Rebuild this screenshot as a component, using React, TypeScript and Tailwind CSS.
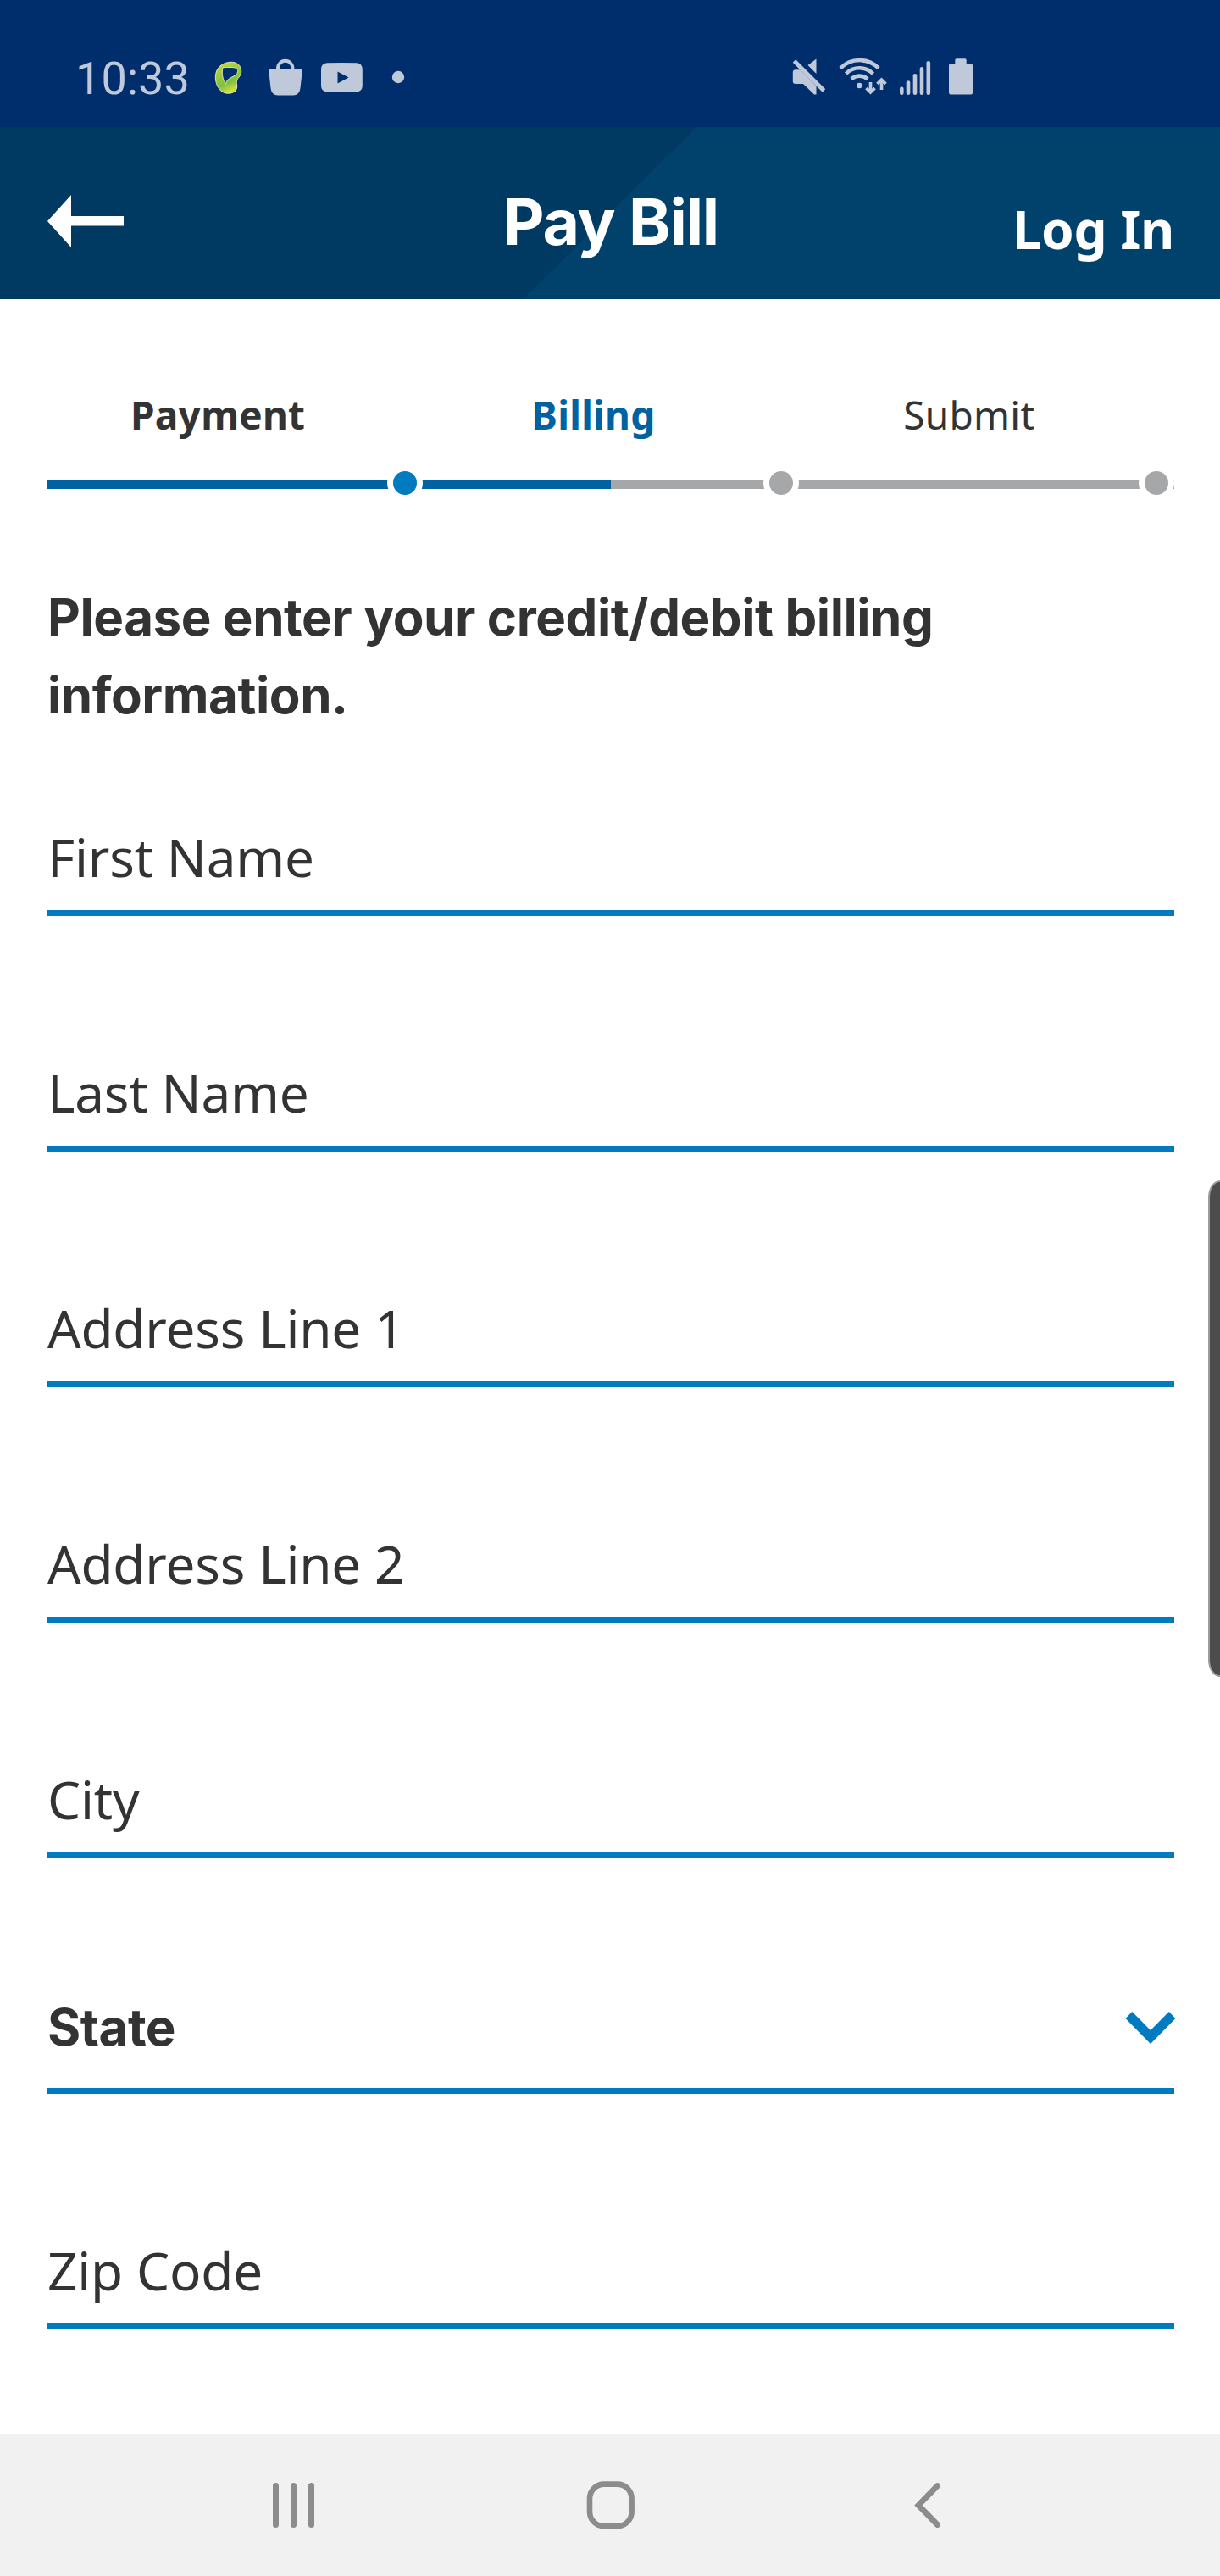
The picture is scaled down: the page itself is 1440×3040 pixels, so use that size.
const ICON = '#bfc9da'

function StatusBar() {
  return (
    <div className="flex h-[150px] items-start justify-between bg-[#002e6c] pr-[292px] pl-[89px] text-[#bfc9da]">
      <div className="flex">
        <span className="mt-[61px] w-[160px] whitespace-nowrap font-['Roboto',sans-serif] text-[54px] leading-[64px] tracking-[0.1px]">
          10:33
        </span>
        <svg className="mt-[60px]" width="240" height="64" viewBox="249 60 240 64">
          <defs>
            <linearGradient id="leaf" x1="0" y1="0" x2="0.35" y2="1">
              <stop offset="0" stopColor="#d6e035" />
              <stop offset="0.35" stopColor="#a5cd3c" />
              <stop offset="0.75" stopColor="#7fbf42" />
              <stop offset="1" stopColor="#d3e03a" />
            </linearGradient>
          </defs>
          <path
            d="M271 73.300C280 72.500 285 77.500 284.800 85C284.600 90.500 280 91.500 279.300 96C279 99 280.200 101 279.500 104C278.500 108.500 273.500 110.500 268.500 110.300C260 110 254.300 101 254.300 91C254.300 81 261 74.300 271 73.300ZM263 79.800C261.500 87 263 94.500 266.500 99.500C266.800 90.500 279.800 91.500 280.800 84C281 79.500 276 79 263 79.800Z"
            fill="url(#leaf)"
            fillRule="evenodd"
            stroke="#f4f7cf"
            strokeWidth="0.8"
          />
          <path d="M317 81.500H357L354.500 104Q353.500 112.500 346 112.500H328Q320.500 112.500 319.500 104Z" fill={ICON} />
          <path d="M328 83V80.500a8.700 8.700 0 0 1 17.400 0V83" fill="none" stroke={ICON} strokeWidth="4" />
          <path
            d="M386 74.200Q403.500 73.600 421 74.200Q427.800 74.800 427.800 82V101Q427.800 108 421 108.500Q403.500 109.200 386 108.500Q379 108 379 101V82Q379 74.800 386 74.200ZM398.500 84.500V98.500L411.500 91.500Z"
            fill={ICON}
            fillRule="evenodd"
          />
          <circle cx="470" cy="91" r="7.200" fill={ICON} />
        </svg>
      </div>
      <svg className="mt-[60px]" width="218" height="64" viewBox="930 60 218 64" fill={ICON}>
        <path d="M963.500 69.500V87L953.500 77Z" />
        <path d="M939 82.300H944.500L963.500 101.500V111.500H961L948 99H939Q935.800 99 935.800 96V85.500Q935.800 82.300 939 82.300Z" />
        <path d="M937.500 72L972.500 107" stroke={ICON} strokeWidth="5" />
        <g fill="none" stroke={ICON} strokeWidth="4.600">
          <path d="M992 80.500A31.500 31.500 0 0 1 1037 80.500" />
          <path d="M998.500 87A22.500 22.500 0 0 1 1030.500 87" />
          <path d="M1005 93.500A13.500 13.500 0 0 1 1024 93.500" />
          <path d="M1027.500 97V109M1022.500 104L1027.500 109L1032.500 104M1040.500 106V94M1035.500 99L1040.500 94L1045.500 99" strokeWidth="3.600" />
        </g>
        <circle cx="1014.300" cy="101" r="3.300" />
        <rect x="1062" y="102.500" width="4.600" height="9.500" rx="2.300" />
        <rect x="1069.700" y="95.300" width="4.600" height="16.700" rx="2.300" />
        <rect x="1077.700" y="87" width="4.600" height="25" rx="2.300" />
        <rect x="1085.700" y="79" width="4.600" height="33" rx="2.300" />
        <rect x="1093.500" y="72" width="4.600" height="40" rx="2.300" />
        <path d="M1129 69.300H1139Q1140.700 69.300 1140.700 71V75H1146Q1148 75 1148 77V109.500Q1148 111.500 1146 111.500H1122Q1120 111.500 1120 109.500V77Q1120 75 1122 75H1127.300V71Q1127.300 69.300 1129 69.300Z" />
      </svg>
    </div>
  )
}

function Header() {
  return (
    <header className="grid h-[203px] grid-cols-[1fr_auto_1fr] bg-[linear-gradient(135.200deg,#003962_50%,#00426c_50%)] pr-[54px] pl-[56px] text-white">
      <svg className="mt-[80px]" width="90" height="62" viewBox="0 0 90 62" fill="currentColor">
        <path d="M0 31L28 0V25H90V36.500H28V62Z" />
      </svg>
      <h1 className="mt-[67px] whitespace-nowrap font-['Inter',sans-serif] text-[75px] leading-[90px] font-bold tracking-[-1.2px]">
        Pay Bill
      </h1>
      <span className="mt-[80px] justify-self-end whitespace-nowrap font-['Noto_Sans',sans-serif] text-[62px] leading-[80px] font-bold tracking-[-0.3px]">
        Log In
      </span>
    </header>
  )
}

const steps = [
  { name: 'Payment', label: 'font-bold text-[#333333]', fill: 'w-full', dot: 'bg-[#007bbf]' },
  { name: 'Billing', label: 'font-bold text-[#0062a0]', fill: 'w-1/2', dot: 'bg-[#a6a7a9]' },
  { name: 'Submit', label: 'text-[#333333]', fill: 'w-0', dot: 'bg-[#a6a7a9]' },
]

function Progress() {
  return (
    <div className="grid grid-cols-3 pt-[104px]">
      {steps.map((s) => (
        <div key={s.name}>
          <div className={`pr-[41px] text-center font-['Noto_Sans',sans-serif] text-[46px] leading-[64px] tracking-[0.25px] ${s.label}`}>
            {s.name}
          </div>
          <div className="relative mt-[45px] h-[11px] bg-[#a6a7a9] pt-px">
            <div className={`h-[10px] bg-[#0062a0] ${s.fill}`} />
            <div className="absolute top-[-17px] right-0 flex size-[42px] items-center justify-center rounded-full bg-white">
              <div className={`size-7 rounded-full ${s.dot}`} />
            </div>
          </div>
        </div>
      ))}
    </div>
  )
}

function Field({ label }: { label: string }) {
  return (
    <div className="flex h-[278px] flex-col justify-end border-b-[7px] border-[#007bbf] pb-[21px] font-['Noto_Sans',sans-serif] text-[62px] leading-[84px] tracking-[-0.2px] text-[#333333]">
      {label}
    </div>
  )
}

function StateSelect() {
  return (
    <div className="flex h-[278px] items-end justify-between border-b-[7px] border-[#007bbf] pb-[30px]">
      <span className="font-['Inter',sans-serif] text-[60px] leading-[84px] font-bold tracking-[-0.5px] text-[#333333]">
        State
      </span>
      <svg className="mr-[-2px] mb-[22px]" width="60" height="38" viewBox="0 0 60 38" fill="#007bbf">
        <path d="M0.500 8L8.200 0L30 22L51.800 0L59.500 8L30 38Z" />
      </svg>
    </div>
  )
}

function NavBar() {
  return (
    <nav className="flex h-[168px] items-start bg-[#f1f1f1] pt-[55px] pl-[321px] text-[#8c8c8c]">
      <svg width="51" height="58" viewBox="0 0 51 58" fill="currentColor">
        <rect x="1" y="3" width="7" height="53" rx="3.500" />
        <rect x="22" y="3" width="7" height="53" rx="3.500" />
        <rect x="43" y="3" width="7" height="53" rx="3.500" />
      </svg>
      <svg className="ml-[320px]" width="58" height="58" viewBox="0 0 58 58" fill="none" stroke="currentColor" strokeWidth="6.600">
        <rect x="4" y="4.600" width="49.600" height="49.600" rx="17" />
      </svg>
      <svg className="ml-[328px]" width="33" height="58" viewBox="0 0 33 58" fill="none" stroke="currentColor" strokeWidth="6.800" strokeLinecap="round">
        <path d="M28.500 6.500L6 29.500L28.500 52.500" />
      </svg>
    </nav>
  )
}

export default function App() {
  return (
    <div className="relative flex h-[3040px] w-[1440px] flex-col overflow-hidden bg-white">
      <StatusBar />
      <Header />
      <main className="flex-1 pr-[54px] pl-[56px]">
        <Progress />
        <h2 className="mt-[105px] h-[121px] font-['Inter',sans-serif] text-[60px] leading-[92px] font-bold tracking-[-0.43px] whitespace-nowrap text-[#333333]">
          Please enter your credit/debit billing
          <br />
          information.
        </h2>
        <Field label="First Name" />
        <Field label="Last Name" />
        <Field label="Address Line 1" />
        <Field label="Address Line 2" />
        <Field label="City" />
        <StateSelect />
        <Field label="Zip Code" />
      </main>
      <NavBar />
      <div className="absolute top-[1393px] right-[-20px] h-[586px] w-[34px] rounded-[14px/20px] border-2 border-[#9c9c9c] bg-[#4c4c4c]" />
    </div>
  )
}
